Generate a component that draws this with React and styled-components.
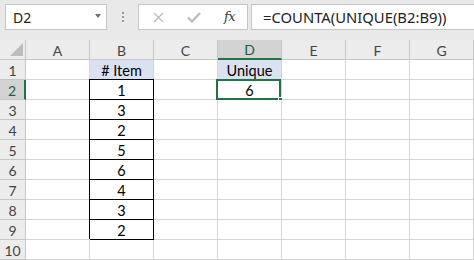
import React from "react";
import styled, { createGlobalStyle, css } from "styled-components";

const GREEN = "#217346";
const GRID = "#d4d4d4";
const HEAD_LINE = "#c6c6c6";

const Global = createGlobalStyle`
  html, body { margin: 0; padding: 0; background: #ffffff; overflow: hidden; }
  * { box-sizing: border-box; }
`;

const Page = styled.div`
  width: 474px;
  height: 260px;
  display: flex;
  flex-direction: column;
  overflow: hidden;
`;

const FormulaBar = styled.div`
  height: 40px;
  flex: none;
  background: #e9e9e9;
  display: flex;
  align-items: flex-start;
  padding: 4px 0 0 5px;
`;

const NameBox = styled.div`
  width: 102px;
  height: 26px;
  background: #ffffff;
  border: 1px solid ${HEAD_LINE};
  display: flex;
  align-items: center;
  justify-content: space-between;
  padding: 0 5px 0 7px;
  font-family: "Noto Sans", "Open Sans", sans-serif;
  font-size: 14px;
  color: #222;
`;

const DropArrow = styled.span`
  width: 0;
  height: 0;
  border-left: 3.5px solid transparent;
  border-right: 3.5px solid transparent;
  border-top: 4px solid #6d6d6d;
  margin-top: -3px;
`;

const Grip = styled.div`
  width: 31px;
  height: 26px;
  display: flex;
  flex-direction: column;
  align-items: center;
  justify-content: center;
  gap: 2px;
`;

const GripDot = styled.span`
  width: 2px;
  height: 2px;
  background: #9a9a9a;
`;

const IconBox = styled.div`
  width: 110px;
  height: 26px;
  background: #ffffff;
  border: 1px solid ${HEAD_LINE};
  display: flex;
  align-items: center;
  padding-left: 14px;
`;

const IconSlot = styled.span`
  width: ${(p) => p.$w}px;
  display: flex;
  align-items: center;
  justify-content: flex-start;
`;

const Fx = styled.span`
  font-family: "DejaVu Serif", "Liberation Serif", serif;
  font-style: italic;
  font-size: 13px;
  color: #3a3a3a;
  letter-spacing: -0.5px;
  margin-top: -2px;
`;

const FormulaInput = styled.div`
  flex: 1;
  height: 26px;
  margin-left: 3px;
  background: #ffffff;
  border: 1px solid ${HEAD_LINE};
  border-right: none;
  display: flex;
  align-items: center;
  padding-left: 11px;
  font-family: "Noto Sans", "Open Sans", sans-serif;
  font-size: 14.8px;
  color: #222;
  white-space: nowrap;
`;

const Sheet = styled.div`
  flex: 1;
  display: grid;
  grid-template-columns: 26px repeat(7, 64px);
  grid-template-rows: repeat(11, 20px);
  font-family: "Lato", "Liberation Sans", sans-serif;
`;

const Corner = styled.div`
  background: #ececec;
  border-right: 1px solid ${HEAD_LINE};
  border-bottom: 1px solid ${HEAD_LINE};
  display: flex;
  align-items: flex-end;
  justify-content: flex-end;
  padding: 0 2px 3px 0;
`;

const ColHead = styled.div`
  background: ${(p) => (p.$active ? "#d3d3d3" : "#ececec")};
  border-right: 1px solid ${HEAD_LINE};
  border-bottom: ${(p) => (p.$active ? `2px solid ${GREEN}` : `1px solid ${HEAD_LINE}`)};
  display: flex;
  align-items: center;
  justify-content: center;
  font-size: 14px;
  color: ${(p) => (p.$active ? "#1f5c3a" : "#444")};
  padding-top: 1px;
`;

const RowHead = styled.div`
  background: ${(p) => (p.$active ? "#d3d3d3" : "#ececec")};
  border-right: ${(p) => (p.$active ? `2px solid ${GREEN}` : `1px solid ${HEAD_LINE}`)};
  border-bottom: 1px solid ${HEAD_LINE};
  display: flex;
  align-items: center;
  justify-content: center;
  font-size: 14px;
  color: ${(p) => (p.$active ? "#1f5c3a" : "#444")};
  padding-top: 1px;
`;

const Cell = styled.div`
  position: relative;
  background: ${(p) => (p.$fill ? "#d9e1f2" : "#ffffff")};
  border-right: 1px solid ${GRID};
  border-bottom: 1px solid ${GRID};
  display: flex;
  align-items: center;
  justify-content: center;
  font-size: 14.5px;
  color: #000;
  padding-top: 1px;
  ${(p) =>
    p.$boxed &&
    css`
      border-right-color: #000;
      border-bottom-color: #000;
      &::before {
        content: "";
        position: absolute;
        top: -1px;
        left: -1px;
        right: -1px;
        bottom: 0;
        border-top: 1px solid #000;
        border-left: 1px solid #000;
        pointer-events: none;
      }
    `}
`;

const Selection = styled.span`
  position: absolute;
  top: -1px;
  left: -2px;
  right: 0;
  bottom: -1px;
  border: 2px solid ${GREEN};
  pointer-events: none;
`;

const FillHandle = styled.span`
  position: absolute;
  right: -3px;
  bottom: -4px;
  width: 6px;
  height: 6px;
  background: ${GREEN};
  border: 1px solid #ffffff;
  pointer-events: none;
`;

const columns = ["A", "B", "C", "D", "E", "F", "G"];
const items = [1, 3, 2, 5, 6, 4, 3, 2];

function cellContent(row, col) {
  if (col === "B") {
    if (row === 1) return "# Item";
    if (row >= 2 && row <= 9) return String(items[row - 2]);
  }
  if (col === "D") {
    if (row === 1) return "Unique";
    if (row === 2) return "6";
  }
  return "";
}

export default function App() {
  const rows = Array.from({ length: 10 }, (_, i) => i + 1);
  return (
    <>
      <Global />
      <Page>
        <FormulaBar>
          <NameBox>
            <span>D2</span>
            <DropArrow />
          </NameBox>
          <Grip>
            <GripDot />
            <GripDot />
            <GripDot />
          </Grip>
          <IconBox>
            <IconSlot $w={34}>
              <svg width="11" height="11" viewBox="0 0 11 11">
                <path d="M1 1 L10 10 M10 1 L1 10" stroke="#bdbdbd" strokeWidth="1.4" fill="none" />
              </svg>
            </IconSlot>
            <IconSlot $w={37}>
              <svg width="14" height="11" viewBox="0 0 14 11">
                <path d="M1 5.5 L5 9.5 L13 1" stroke="#bdbdbd" strokeWidth="2.4" fill="none" />
              </svg>
            </IconSlot>
            <IconSlot $w={16}>
              <Fx>fx</Fx>
            </IconSlot>
          </IconBox>
          <FormulaInput>=COUNTA(UNIQUE(B2:B9))</FormulaInput>
        </FormulaBar>
        <Sheet>
          <Corner>
            <svg width="13" height="13" viewBox="0 0 13 13">
              <path d="M13 0 L13 13 L0 13 Z" fill="#bcbcbc" />
            </svg>
          </Corner>
          {columns.map((c) => (
            <ColHead key={c} $active={c === "D"}>
              {c}
            </ColHead>
          ))}
          {rows.map((r) => (
            <React.Fragment key={r}>
              <RowHead $active={r === 2}>{r}</RowHead>
              {columns.map((c) => {
                const fill = r === 1 && (c === "B" || c === "D");
                const boxed = c === "B" && r >= 2 && r <= 9;
                const selected = c === "D" && r === 2;
                return (
                  <Cell key={c} $fill={fill} $boxed={boxed}>
                    {cellContent(r, c)}
                    {selected && (
                      <>
                        <Selection />
                        <FillHandle />
                      </>
                    )}
                  </Cell>
                );
              })}
            </React.Fragment>
          ))}
        </Sheet>
      </Page>
    </>
  );
}
